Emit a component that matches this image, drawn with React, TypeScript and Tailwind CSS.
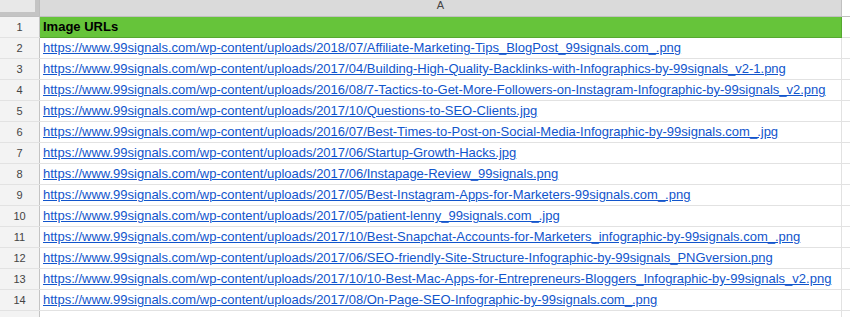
const urls = [
  'https://www.99signals.com/wp-content/uploads/2018/07/Affiliate-Marketing-Tips_BlogPost_99signals.com_.png',
  'https://www.99signals.com/wp-content/uploads/2017/04/Building-High-Quality-Backlinks-with-Infographics-by-99signals_v2-1.png',
  'https://www.99signals.com/wp-content/uploads/2016/08/7-Tactics-to-Get-More-Followers-on-Instagram-Infographic-by-99signals_v2.png',
  'https://www.99signals.com/wp-content/uploads/2017/10/Questions-to-SEO-Clients.jpg',
  'https://www.99signals.com/wp-content/uploads/2016/07/Best-Times-to-Post-on-Social-Media-Infographic-by-99signals.com_.jpg',
  'https://www.99signals.com/wp-content/uploads/2017/06/Startup-Growth-Hacks.jpg',
  'https://www.99signals.com/wp-content/uploads/2017/06/Instapage-Review_99signals.png',
  'https://www.99signals.com/wp-content/uploads/2017/05/Best-Instagram-Apps-for-Marketers-99signals.com_.png',
  'https://www.99signals.com/wp-content/uploads/2017/05/patient-lenny_99signals.com_.jpg',
  'https://www.99signals.com/wp-content/uploads/2017/10/Best-Snapchat-Accounts-for-Marketers_infographic-by-99signals.com_.png',
  'https://www.99signals.com/wp-content/uploads/2017/06/SEO-friendly-Site-Structure-Infographic-by-99signals_PNGversion.png',
  'https://www.99signals.com/wp-content/uploads/2017/10/10-Best-Mac-Apps-for-Entrepreneurs-Bloggers_Infographic-by-99signals_v2.png',
  'https://www.99signals.com/wp-content/uploads/2017/08/On-Page-SEO-Infographic-by-99signals.com_.png',
];

function RowNum({ n }: { n: number | string }) {
  return (
    <div className="w-[40px] shrink-0 bg-[#f3f3f3] border-r border-[#c4c4c4] flex items-center justify-center text-[11px] text-[#444]">
      {n}
    </div>
  );
}

export default function App() {
  return (
    <div className="w-[850px] h-[317px] overflow-hidden bg-white font-['Liberation_Sans',Arial,sans-serif]">
      {/* column header */}
      <div className="flex h-[17px] border-b border-[#c0c0c0]">
        <div className="w-[40px] shrink-0 bg-[#c4c4c4] border-r border-[#bdbdbd]">
          <div className="w-[35px] h-[12px] bg-[#e8e8e8]" />
        </div>
        <div className="w-[802px] shrink-0 bg-[#dadada] border-r border-[#c0c0c0] flex justify-center text-[11px] leading-[11px] text-[#444]">
          <span>A</span>
        </div>
        <div className="flex-1" />
      </div>

      {/* row 1 */}
      <div className="flex h-[21px] border-b border-[#e2e2e2]">
        <RowNum n={1} />
        <div className="w-[802px] shrink-0 bg-[#66c43a] border-r border-b border-[#56a830] -mb-px flex items-center px-[3px] text-[13px] font-bold text-black">
          Image URLs
        </div>
        <div className="flex-1" />
      </div>

      {urls.map((u, i) => (
        <div key={i} className="flex h-[21px] border-b border-[#e2e2e2]">
          <RowNum n={i + 2} />
          <div className="w-[802px] shrink-0 border-r border-[#e2e2e2] flex items-center px-[3px] text-[13px] whitespace-nowrap overflow-hidden">
            <a className="text-[#1155cc] underline" href="#">
              {u}
            </a>
          </div>
          <div className="flex-1" />
        </div>
      ))}

      <div className="flex h-[21px] border-b border-[#e2e2e2]">
        <RowNum n="" />
        <div className="w-[802px] shrink-0 border-r border-[#e2e2e2]" />
        <div className="flex-1" />
      </div>
    </div>
  );
}
